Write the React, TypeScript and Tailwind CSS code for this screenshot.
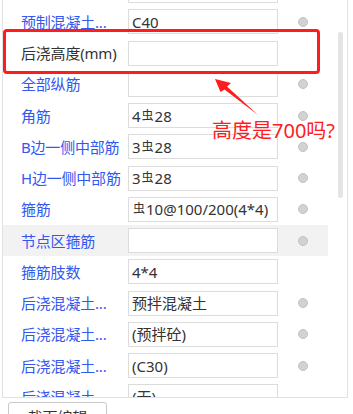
import React from 'react';

type Row = {
  label: string;
  value: React.ReactNode;
  dark?: boolean;
  dot?: boolean;
  selected?: boolean;
};

// 钢筋等级符号
const Bar: React.FC = () => (
  <span className="mx-[1px] text-[12px] align-text-top">虫</span>
);

const rows: Row[] = [
  { label: '', value: '' },
  { label: '预制混凝土...', value: 'C40', dot: true },
  { label: '后浇高度(mm)', value: '', dark: true },
  { label: '全部纵筋', value: '', dot: true },
  { label: '角筋', value: <>4<Bar />28</>, dot: true },
  { label: 'B边一侧中部筋', value: <>3<Bar />28</>, dot: true },
  { label: 'H边一侧中部筋', value: <>3<Bar />28</>, dot: true },
  { label: '箍筋', value: <><Bar />10@100/200(4*4)</>, dot: true },
  { label: '节点区箍筋', value: '', dot: true, selected: true },
  { label: '箍筋肢数', value: '4*4' },
  { label: '后浇混凝土...', value: '预拌混凝土', dot: true },
  { label: '后浇混凝土...', value: '(预拌砼)', dot: true },
  { label: '后浇混凝土...', value: '(C30)', dot: true },
  { label: '后浇混凝土...', value: '(无)' },
];

const PropRow: React.FC<{ row: Row }> = ({ row }) => (
  <div className={`flex items-center h-[31.25px] shrink-0 ${row.selected ? 'bg-[#f2f2f2]' : ''}`}>
    <span
      className={`w-[125px] shrink-0 pl-[18px] text-[15px] leading-[20px] tracking-[-0.2px] whitespace-nowrap ${
        row.dark ? 'text-[#333333]' : 'text-[#3358f0]'
      }`}
    >
      {row.label}
    </span>
    <div className="w-[150px] h-[25px] shrink-0 border border-[#dcdcdc] bg-white pl-[3px] flex items-center text-[15px] leading-[20px] text-[#333333] whitespace-nowrap">
      {row.value}
    </div>
    {row.dot && (
      <div className="ml-[20px] w-[10px] h-[10px] rounded-full bg-[#d2d2d2] border border-[#c2c2c2]" />
    )}
  </div>
);

const App: React.FC = () => {
  return (
    <div className="relative w-[353px] h-[414px] overflow-hidden bg-white font-['Noto_Sans','Noto_Sans_CJK_SC',sans-serif]">
      {/* 属性面板 */}
      <div className="ml-[2px] w-[346px] h-[398px] border-x border-b border-[#e1e1e1] flex overflow-hidden">
        <div className="w-[325px] flex flex-col -mt-[25px]">
          {rows.map((r, i) => (
            <PropRow key={i} row={r} />
          ))}
        </div>
        {/* 滚动条 */}
        <div className="flex-1">
          <div className="ml-[10px] mt-[32px] w-[5px] h-[166px] rounded-full bg-[#e4e4e4]" />
        </div>
      </div>

      <div className="ml-[8px] mt-[4px] w-[99px] h-[28px] border border-[#c9c9c9] rounded-[3px] flex justify-center pt-[4px] text-[15px] leading-[20px] text-[#333333]">
        截面编辑
      </div>

      {/* 标注 */}
      <div className="absolute left-[3px] top-[29px] w-[317px] h-[45px] border-[3px] border-[#fe1c1c] rounded-[4px]" />
      <svg className="absolute left-0 top-0" width="353" height="414" viewBox="0 0 353 414">
        <polygon
          points="215,79 231,83 227,86.5 258,115 224.5,89.5 220.5,92"
          fill="#fe1c1c"
        />
      </svg>
      <div className="absolute left-[212px] top-[119px] text-[20px] leading-[24px] text-[#fe1c1c] whitespace-nowrap">
        高度是700吗?
      </div>
    </div>
  );
};

export default App;
